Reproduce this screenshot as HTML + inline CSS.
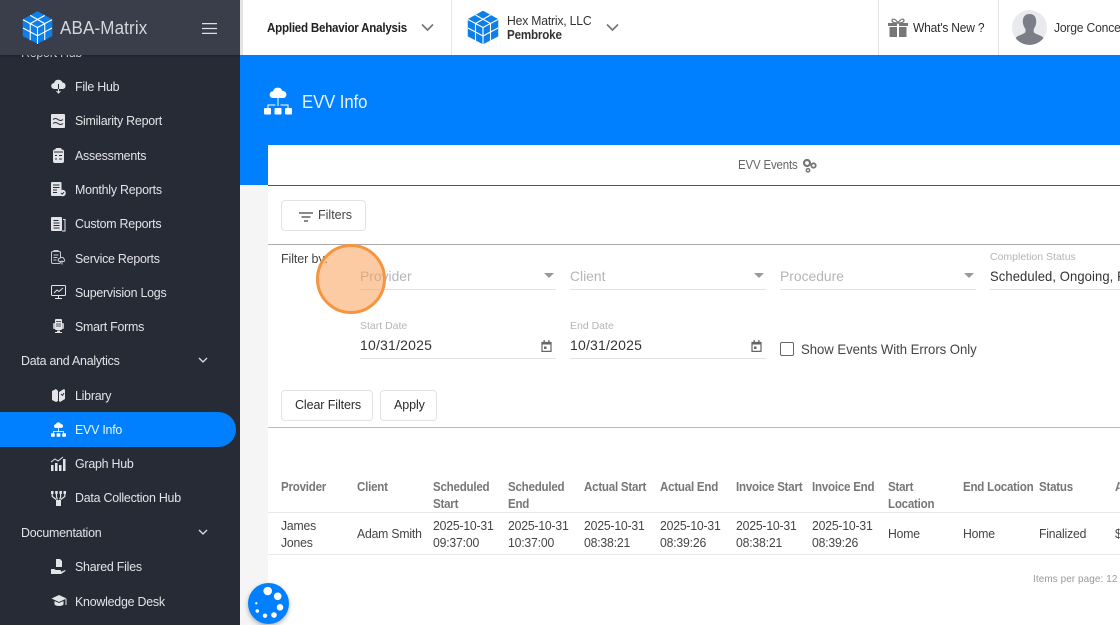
<!DOCTYPE html>
<html lang="en"><head><meta charset="utf-8"><title>EVV Info</title>
<style>
html,body{margin:0;padding:0;width:1120px;height:625px;overflow:hidden;background:#fff}
body{position:relative;font-family:"Liberation Sans",sans-serif;color:#2b2b2b}
.a{position:absolute}
.t{position:absolute;white-space:nowrap;font-size:13px;line-height:16px;letter-spacing:-.2px;transform-origin:0 0}
.s{color:#e3e4e7;font-size:13px;letter-spacing:-.25px;transform:scaleX(.955)}
.h{color:#777;font-weight:bold;font-size:12.5px;letter-spacing:-.25px;transform:scaleX(.925)}
.d{color:#444;font-size:13px;letter-spacing:-.2px;transform:scaleX(.94)}
.l{position:absolute;height:1px;background:#ddd}
.btn{position:absolute;box-sizing:border-box;border:1px solid #e2e2e2;border-radius:4px;background:#fff}
.ph{color:#b5b5b5;font-size:14px;letter-spacing:0;transform:scaleX(.99)}
.lb{color:#b5b5b5;font-size:10.5px;letter-spacing:0}
.v{color:#333;font-size:14px;letter-spacing:.1px}
svg{position:absolute;overflow:visible}
</style></head><body>
<svg width="0" height="0" style="position:absolute"><defs>
<symbol id="cube" viewBox="0 0 32 34">
<path fill="#0f7fe8" stroke="#0f7fe8" stroke-width="1.500" stroke-linejoin="round" d="M16 1l14.500 8v16.500L16 33 1.500 25.500V9z"/>
<path fill="none" stroke="#fff" stroke-width="1.100" d="M8.500 4.500L23.500 13M23.500 4.500L8.500 13M1 9l15 8 15-8M16 17v17M1 17.500l15 8 15-8M8.500 13v17M23.500 13v17"/>
</symbol></defs></svg>

<!-- main backgrounds -->
<div class="a" style="left:240px;top:0;width:880px;height:55px;background:#fff"></div>
<div class="a" style="left:240px;top:55px;width:880px;height:90px;background:#0080ff"></div>
<div class="a" style="left:240px;top:145px;width:28px;height:40px;background:#0080ff"></div>
<div class="a" style="left:240px;top:185px;width:28px;height:440px;background:#f5f5f5"></div>
<div class="a" style="left:240px;top:0;width:3px;height:55px;background:#e4e4e4"></div>

<!-- top bar -->
<div class="t" style="left:267px;top:20px;font-weight:bold;font-size:12.500px;color:#222;letter-spacing:-.25px;transform:scaleX(.927)">Applied Behavior Analysis</div>
<svg style="left:421px;top:23px" width="13" height="9" viewBox="0 0 13 9"><path d="M1 1.500l5.500 5.500L12 1.500" fill="none" stroke="#777" stroke-width="1.700"/></svg>
<div class="a" style="left:451px;top:0;width:1px;height:55px;background:#e6e6e6"></div>
<svg style="left:467px;top:10px" width="32" height="35"><use href="#cube" width="32" height="35"/></svg>
<div class="t" style="left:507px;top:13px;font-size:12.500px;color:#333;transform:scaleX(.975)">Hex Matrix, LLC</div>
<div class="t" style="left:507px;top:27px;font-size:12.500px;font-weight:bold;color:#333;transform:scaleX(.93)">Pembroke</div>
<svg style="left:606px;top:23px" width="13" height="9" viewBox="0 0 13 9"><path d="M1 1.500l5.500 5.500L12 1.500" fill="none" stroke="#777" stroke-width="1.700"/></svg>
<div class="a" style="left:878px;top:0;width:1px;height:55px;background:#e2e2e2"></div>
<svg style="left:888px;top:18px" width="20" height="19" viewBox="0 0 20 19"><path fill="#777" d="M0 5h9v3H0zM11 5h9v3h-9zM1.500 9H9v10H1.500zM11 9h7.500v10H11z"/><path fill="none" stroke="#777" stroke-width="1.300" d="M10 5C8 1 4 0 4 2.500S8 5 10 5c2 0 6 0 6-2.500S12 1 10 5z"/></svg>
<div class="t" style="left:913px;top:20px;font-size:12.500px;color:#2b2b2b;transform:scaleX(.96)">What's New ?</div>
<div class="a" style="left:998px;top:0;width:1px;height:55px;background:#e2e2e2"></div>
<div class="a" style="left:1012px;top:10px;width:35px;height:35px;border-radius:50%;background:#e9eaee;overflow:hidden">
<svg style="left:0;top:0" width="35" height="35" viewBox="0 0 35 35"><path fill="#7b7e86" d="M17.500 4c4.500 0 6.700 3 6.700 7.500 0 3-1 5.500-2.500 7.500v3c1 2 7 3 9.500 5.500V35H4v-7.500c2.500-2.500 8.500-3.500 9.500-5.500v-3C12 17 10.800 14.500 10.800 11.500 10.800 7 13 4 17.500 4z"/></svg></div>
<div class="t" style="left:1054px;top:20px;width:68px;overflow:hidden;font-size:12.500px;color:#333;transform:scaleX(.97)">Jorge Concepcion</div>

<!-- page title -->
<svg style="left:264px;top:87px" width="28" height="28" viewBox="0 0 28 28" fill="#fff"><path d="M8 11a3.500 3.500 0 0 1 1-6.800A5 5 0 0 1 18.500 4 3.600 3.600 0 0 1 20 11z"/><path fill="none" stroke="#fff" stroke-width="1" d="M14 11v8M4 21v-3h7.500M24 21v-3h-7.500"/><rect x="0" y="21" width="7" height="6.500" rx="1"/><rect x="10.500" y="21" width="7" height="6.500" rx="1"/><rect x="21" y="21" width="7" height="6.500" rx="1"/></svg>
<div class="t" style="left:302px;top:91px;font-size:18px;line-height:22px;color:#eaf4ff;letter-spacing:-.1px;transform:scaleX(.93)">EVV Info</div>

<!-- tab header -->
<div class="a" style="left:268px;top:145px;width:852px;height:41px;background:#fff;border-bottom:1.500px solid #555;box-sizing:border-box"></div>
<div class="t" style="left:738px;top:157px;font-size:12.500px;color:#666;transform:scaleX(.92)">EVV Events</div>
<svg style="left:802px;top:158px" width="15" height="15" viewBox="0 0 15 15" fill="none" stroke="#777"><circle cx="5" cy="5" r="3" stroke-width="2.200"/><circle cx="11.500" cy="7.500" r="2.200" stroke-width="1.800"/><circle cx="6" cy="12.300" r="1.700" stroke-width="1.500"/></svg>

<!-- filters button -->
<div class="btn" style="left:281px;top:200px;width:85px;height:31px"></div>
<svg style="left:299px;top:212px" width="14" height="10" viewBox="0 0 14 10" stroke="#444" stroke-width="1.200"><path d="M0 1h14M2.500 5h9M5 9h4"/></svg>
<div class="t" style="left:318px;top:207px;font-size:12.500px;color:#444;letter-spacing:0">Filters</div>
<div class="l" style="left:268px;top:244px;width:852px;background:#aaa"></div>

<div class="t" style="left:281px;top:251px;font-size:12.500px;color:#444;letter-spacing:-.1px">Filter by:</div>

<!-- fields row 1 -->
<div class="t ph" style="left:360px;top:268px">Provider</div>
<div class="t ph" style="left:570px;top:268px">Client</div>
<div class="t ph" style="left:780px;top:268px">Procedure</div>
<div class="t lb" style="left:990px;top:249px">Completion Status</div>
<div class="t v" style="left:990px;top:268px;width:140px;overflow:hidden;transform:scaleX(.93)">Scheduled, Ongoing, Finalized</div>
<div class="l" style="left:360px;top:289px;width:196px;background:#e3e3e3"></div>
<div class="l" style="left:570px;top:289px;width:196px;background:#e3e3e3"></div>
<div class="l" style="left:780px;top:289px;width:196px;background:#e3e3e3"></div>
<div class="l" style="left:990px;top:289px;width:130px;background:#e3e3e3"></div>
<svg style="left:544px;top:273px" width="10" height="5"><path d="M0 0h10L5 5z" fill="#999"/></svg>
<svg style="left:754px;top:273px" width="10" height="5"><path d="M0 0h10L5 5z" fill="#999"/></svg>
<svg style="left:964px;top:273px" width="10" height="5"><path d="M0 0h10L5 5z" fill="#999"/></svg>

<!-- fields row 2 -->
<div class="t lb" style="left:360px;top:318px">Start Date</div>
<div class="t lb" style="left:570px;top:318px">End Date</div>
<div class="t v" style="left:360px;top:337px;letter-spacing:.2px">10/31/2025</div>
<div class="t v" style="left:570px;top:337px;letter-spacing:.2px">10/31/2025</div>
<div class="l" style="left:360px;top:358px;width:196px;background:#e3e3e3"></div>
<div class="l" style="left:570px;top:358px;width:196px;background:#e3e3e3"></div>
<svg style="left:541px;top:340px" width="11" height="12" viewBox="0 0 11 12"><path fill="none" stroke="#666" stroke-width="1.200" d="M1 2.500h9v8.900H1z"/><path fill="#666" d="M1 2h9v2.500H1zM2.500 0h1.300v2H2.500zM7.200 0h1.300v2H7.200zM3 6.500h2.500V9H3z"/></svg>
<svg style="left:751px;top:340px" width="11" height="12" viewBox="0 0 11 12"><path fill="none" stroke="#666" stroke-width="1.200" d="M1 2.500h9v8.900H1z"/><path fill="#666" d="M1 2h9v2.500H1zM2.500 0h1.300v2H2.500zM7.200 0h1.300v2H7.200zM3 6.500h2.500V9H3z"/></svg>
<div class="a" style="left:780px;top:342px;width:14px;height:14px;box-sizing:border-box;border:1.300px solid #666;border-radius:2px"></div>
<div class="t" style="left:801px;top:341px;font-size:14px;color:#444;letter-spacing:-.05px;transform:scaleX(.94)">Show Events With Errors Only</div>

<!-- buttons -->
<div class="btn" style="left:281px;top:390px;width:92px;height:31px"></div>
<div class="t" style="left:295px;top:397px;font-size:12.500px;color:#2b2b2b;letter-spacing:-.1px">Clear Filters</div>
<div class="btn" style="left:380px;top:390px;width:57px;height:31px"></div>
<div class="t" style="left:394px;top:397px;font-size:12.500px;color:#2b2b2b;letter-spacing:-.1px">Apply</div>
<div class="l" style="left:268px;top:427px;width:852px;background:#bbb"></div>

<!-- table -->
<div class="t h" style="left:281px;top:479px">Provider</div>
<div class="t h" style="left:357px;top:479px">Client</div>
<div class="t h" style="left:433px;top:479px">Scheduled<br><span style="display:block;margin-top:1px">Start</span></div>
<div class="t h" style="left:508px;top:479px">Scheduled<br><span style="display:block;margin-top:1px">End</span></div>
<div class="t h" style="left:584px;top:479px">Actual Start</div>
<div class="t h" style="left:660px;top:479px">Actual End</div>
<div class="t h" style="left:736px;top:479px">Invoice Start</div>
<div class="t h" style="left:812px;top:479px">Invoice End</div>
<div class="t h" style="left:888px;top:479px">Start<br><span style="display:block;margin-top:1px">Location</span></div>
<div class="t h" style="left:963px;top:479px">End Location</div>
<div class="t h" style="left:1039px;top:479px">Status</div>
<div class="t h" style="left:1115px;top:479px;width:5px;overflow:hidden">A</div>
<div class="l" style="left:268px;top:512px;width:852px;background:#e8e8e8"></div>
<div class="t d" style="left:281px;top:517px;line-height:17px">James<br>Jones</div>
<div class="t d" style="left:357px;top:526px">Adam Smith</div>
<div class="t d" style="left:433px;top:517px;line-height:17px">2025-10-31<br>09:37:00</div>
<div class="t d" style="left:508px;top:517px;line-height:17px">2025-10-31<br>10:37:00</div>
<div class="t d" style="left:584px;top:517px;line-height:17px">2025-10-31<br>08:38:21</div>
<div class="t d" style="left:660px;top:517px;line-height:17px">2025-10-31<br>08:39:26</div>
<div class="t d" style="left:736px;top:517px;line-height:17px">2025-10-31<br>08:38:21</div>
<div class="t d" style="left:812px;top:517px;line-height:17px">2025-10-31<br>08:39:26</div>
<div class="t d" style="left:888px;top:526px">Home</div>
<div class="t d" style="left:963px;top:526px">Home</div>
<div class="t d" style="left:1039px;top:526px">Finalized</div>
<div class="t d" style="left:1115px;top:526px;width:5px;overflow:hidden">$</div>
<div class="l" style="left:268px;top:554px;width:852px;background:#e8e8e8"></div>
<div class="t" style="left:1033px;top:571px;font-size:10.500px;color:#999;letter-spacing:.1px;transform:scaleX(.945)">Items per page: 12</div>

<!-- sidebar -->
<div class="a" style="left:0;top:0;width:240px;height:625px;background:#272b36;overflow:hidden">
<div class="t s" style="left:21px;top:45px">Report Hub</div>
<div class="t s" style="left:75px;top:79px">File Hub</div>
<div class="t s" style="left:75px;top:113px">Similarity Report</div>
<div class="t s" style="left:75px;top:148px">Assessments</div>
<div class="t s" style="left:75px;top:182px">Monthly Reports</div>
<div class="t s" style="left:75px;top:216px">Custom Reports</div>
<div class="t s" style="left:75px;top:251px">Service Reports</div>
<div class="t s" style="left:75px;top:285px">Supervision Logs</div>
<div class="t s" style="left:75px;top:319px">Smart Forms</div>
<div class="t s" style="left:21px;top:353px">Data and Analytics</div>
<div class="t s" style="left:75px;top:388px">Library</div>
<div class="a" style="left:0;top:412px;width:236px;height:35px;background:#0080ff;border-radius:0 18px 18px 0"></div>
<div class="t s" style="left:75px;top:422px;color:#eaf4ff">EVV Info</div>
<div class="t s" style="left:75px;top:456px">Graph Hub</div>
<div class="t s" style="left:75px;top:490px">Data Collection Hub</div>
<div class="t s" style="left:21px;top:525px">Documentation</div>
<div class="t s" style="left:75px;top:559px">Shared Files</div>
<div class="t s" style="left:75px;top:594px">Knowledge Desk</div>

<svg style="left:198px;top:357px" width="10" height="7"><path d="M1 1l4 4 4-4" fill="none" stroke="#dfe0e4" stroke-width="1.300"/></svg>
<svg style="left:198px;top:529px" width="10" height="7"><path d="M1 1l4 4 4-4" fill="none" stroke="#dfe0e4" stroke-width="1.300"/></svg>

<!-- sidebar icons -->
<svg style="left:51px;top:79px" width="15" height="15" viewBox="0 0 15 15" fill="#e3e4e7"><path d="M3.500 10A3 3 0 0 1 3 4 4.500 4.500 0 0 1 11.500 3.500 3.300 3.300 0 0 1 12 10z"/><path stroke="#272b36" stroke-width="1" d="M7.500 5v5"/><path stroke="#e3e4e7" fill="none" stroke-width="1" d="M7.500 10v4M5.500 12l2 2 2-2"/></svg>
<svg style="left:51px;top:114px" width="14" height="14" viewBox="0 0 14 14"><rect width="14" height="14" rx="1" fill="#e3e4e7"/><path d="M2 5.500q2.500-2 5 0t5 0M2 9.500q2.500-2 5 0t5 0" fill="none" stroke="#272b36" stroke-width="1"/></svg>
<svg style="left:53px;top:148px" width="11" height="15" viewBox="0 0 11 15"><rect y="1.500" width="11" height="13.500" rx="2" fill="#e3e4e7"/><rect x="2.500" width="6" height="3" rx="1" fill="#e3e4e7"/><path stroke="#272b36" stroke-width="1" fill="none" d="M1 4h9M2 7.500h2M6 7.500h3M2 11h2M6 11h3"/></svg>
<svg style="left:51px;top:182px" width="15" height="15" viewBox="0 0 15 15"><rect width="10.500" height="14" rx="1" fill="#e3e4e7"/><path stroke="#272b36" stroke-width="1" d="M2 3h6.500M2 5.500h6.500M2 8h4M2 10.500h4"/><circle cx="11.500" cy="11" r="3.300" fill="#e3e4e7"/><path d="M10 11l1.200 1.200 1.800-2" fill="none" stroke="#272b36"/></svg>
<svg style="left:51px;top:217px" width="15" height="14" viewBox="0 0 15 14"><rect x="0" width="11" height="14" rx="1" fill="#e3e4e7"/><path d="M12 2.500h2V14h-3" fill="none" stroke="#e3e4e7" stroke-width="1"/><path stroke="#272b36" stroke-width="1" d="M2.500 3.500h5M2.500 6h6M2.500 8.500h6M2.500 11h6"/></svg>
<svg style="left:51px;top:250px" width="15" height="15" viewBox="0 0 15 15" fill="none" stroke="#c9cad0" stroke-width="1"><rect x=".5" y="1.500" width="9" height="12" rx="1.500"/><path d="M3 1.500V.5h4v1M2.500 5h5M2.500 7.500h4M2.500 10h3"/><path fill="#272b36" d="M8 11.500a1.800 1.800 0 0 1 1-3.300 2.300 2.300 0 0 1 4 .8 1.500 1.500 0 0 1 0 2.500z"/><path d="M11 14.500v-4"/></svg>
<svg style="left:51px;top:285px" width="15" height="15" viewBox="0 0 15 15" fill="none" stroke="#e3e4e7" stroke-width="1"><rect x=".5" y=".5" width="14" height="10" rx="1"/><path d="M3 8l3-3 2 1.500L12 3M7.500 11v2.500M4 13.500h7"/></svg>
<svg style="left:53px;top:319px" width="11" height="15" viewBox="0 0 11 15" fill="#e3e4e7"><rect x="2" width="7" height="11" rx="1"/><rect y="4" width="11" height="6" rx="1" opacity=".8"/><path stroke="#272b36" stroke-width=".8" d="M3 2.500h5M3 5h5M3 7h5"/><path d="M4 11.500h3V13h2v1H2v-1h2z"/></svg>
<svg style="left:52px;top:388px" width="13" height="14" viewBox="0 0 13 14" fill="#e3e4e7"><path d="M0 3l4-2 2 2v10l-2 1-4-2zM7 4l5-3 1 1v9l-5 3-1-1z"/><path d="M9 6l1.500 1.500L12 5" stroke="#272b36" fill="none"/></svg>
<svg style="left:51px;top:422px" width="15" height="15" viewBox="0 0 28 28" fill="#fff"><path d="M8 11a3.500 3.500 0 0 1 1-6.800A5 5 0 0 1 18.500 4 3.600 3.600 0 0 1 20 11z"/><path fill="none" stroke="#fff" stroke-width="1.500" d="M14 11v8M4.500 21v-3h19v3"/><rect x="0" y="21" width="7" height="6.500" rx="1"/><rect x="10.500" y="21" width="7" height="6.500" rx="1"/><rect x="21" y="21" width="7" height="6.500" rx="1"/></svg>
<svg style="left:51px;top:456px" width="15" height="15" viewBox="0 0 15 15" fill="#e3e4e7"><path d="M0 9h2.500v6H0zM4 7h2.500v8H4zM8 9h2.500v6H8zM12 3h2.500v12H12z"/><path d="M0 6l4-3 3 2 5-4" fill="none" stroke="#e3e4e7"/></svg>
<svg style="left:51px;top:491px" width="15" height="15" viewBox="0 0 15 15" fill="#e3e4e7"><path d="M0 0h2.500v3H0zM4.200 0h2.500v3H4.200zM8.400 0h2.500v3H8.400zM12.500 0H15v3h-2.500zM5 9h5v6H5z"/><path d="M1.200 3v2.500l4 3M5.500 3v3l1 2.500M9.600 3v3l-1 2.500M13.800 3v2.500l-4 3" fill="none" stroke="#e3e4e7" stroke-width="1.200"/></svg>
<svg style="left:51px;top:559px" width="15" height="15" viewBox="0 0 15 15" fill="#e3e4e7"><path d="M5 0h4l2 2v6H5z"/><path d="M0 10h3l2 1h4a1 1 0 0 1 0 2H6l5-.5 3-1.500.5 1L10 15H0z"/></svg>
<svg style="left:51px;top:594px" width="16" height="14" viewBox="0 0 16 14" fill="#e3e4e7"><path d="M8 1l7.500 3.500L8 8 .5 4.500z"/><path d="M3.500 7v3.500C5 12.500 11 12.500 12.500 10.500V7L8 9z"/><path d="M15 5v6" stroke="#e3e4e7" fill="none"/></svg>

<!-- sidebar header -->
<div class="a" style="left:0;top:0;width:240px;height:55px;background:#393e4a;box-shadow:0 1px 2px rgba(0,0,0,.3)"></div>
<svg style="left:22px;top:11px" width="31" height="33"><use href="#cube" width="31" height="33"/></svg>
<div class="t" style="left:60px;top:17px;font-size:18px;line-height:22px;color:#d4d6dc;letter-spacing:.15px;transform:scaleX(.945)">ABA-Matrix</div>
<svg style="left:202px;top:23px" width="15" height="11" stroke="#dfe0e4" stroke-width="1.200"><path d="M0 .6h15M0 5.500h15M0 10.400h15"/></svg>
</div>

<!-- chat bubble -->
<div class="a" style="left:248px;top:583px;width:41px;height:41px;border-radius:50%;background:#0080ff;box-shadow:0 2px 5px rgba(0,0,0,.3)"></div>
<svg style="left:248px;top:583px" width="41" height="41" fill="#fff"><circle cx="19.700" cy="8" r="4.300"/><circle cx="29.700" cy="13.300" r="3.800"/><circle cx="32" cy="24.300" r="3.300"/><circle cx="26" cy="32" r="2.800"/><circle cx="17" cy="32.700" r="2.200"/><circle cx="9.300" cy="28" r="1.800"/><circle cx="8.300" cy="20.300" r="1.200"/></svg>

<!-- click marker -->
<div class="a" style="left:316px;top:244px;width:70px;height:70px;box-sizing:border-box;border-radius:50%;border:3px solid #f5953f;background:rgba(250,160,90,.55)"></div>
</body></html>
